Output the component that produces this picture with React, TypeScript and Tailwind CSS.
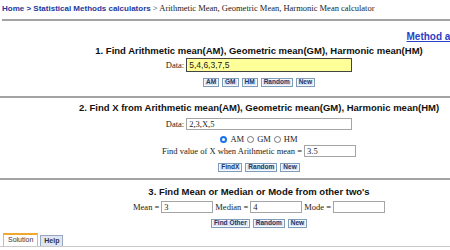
const sans = "font-['Liberation_Sans',Arial,sans-serif]";
const serif = "font-['Liberation_Serif','Times_New_Roman',serif]";

const Btn = ({ label }: { label: string }) => (
  <span
    className={`${sans} flex items-center h-[9px] px-[2px] border border-[#7f9db9] bg-[#dbe5f3] text-[6.5px] font-bold leading-none text-[#1d3466] shadow-[inset_0_0_0_1px_#f4f8fd]`}
  >
    {label}
  </span>
);

const Field = ({ value, w, yellow }: { value: string; w: string; yellow?: boolean }) => (
  <span
    className={`flex items-center ${w} h-full px-[2px] text-[8.5px] leading-none ${
      yellow
        ? `${sans} bg-[#ffff99] border border-[#444] text-[#222]`
        : `${serif} bg-white border border-[#a5a5a5] text-[#222]`
    }`}
  >
    {value}
  </span>
);

const Radio = ({ on }: { on?: boolean }) =>
  on ? (
    <span className="w-[7px] h-[7px] rounded-full bg-[#1a73e8] flex items-center justify-center">
      <span className="w-[3px] h-[3px] rounded-full bg-white" />
    </span>
  ) : (
    <span className="w-[7px] h-[7px] rounded-full border border-[#777] bg-white" />
  );

const Title = ({ text, cls }: { text: string; cls: string }) => (
  <div className={`${sans} ${cls} h-[14px] flex items-center justify-center text-[9.5px] font-bold text-[#111] whitespace-nowrap`}>
    {text}
  </div>
);

const Sep = ({ cls }: { cls: string }) => <div className={`${cls} h-[2px] bg-[#a3a3a3]`} />;

export default function App() {
  return (
    <div className="w-[450px] h-[250px] overflow-hidden bg-white">
      <div className="w-[518px]">
        <div className="h-[19px] pl-[2px] pt-[3px] text-[8px] leading-[10px] whitespace-nowrap">
          <span className={`${sans} font-bold text-[#23399c]`}>Home &gt; Statistical Methods calculators</span>
          <span className={`${serif} text-[8.5px] text-[#222]`}> &gt; Arithmetic Mean, Geometric Mean, Harmonic Mean calculator</span>
        </div>
        <Sep cls="ml-[2px]" />

        <div className="h-[21px] flex items-end justify-end pr-[7px]">
          <span className={`${sans} text-[10px] font-bold text-[#2b41c4] underline leading-[11px] whitespace-nowrap`}>
            Method and examples
          </span>
        </div>

        <Title text="1. Find Arithmetic mean(AM), Geometric mean(GM), Harmonic mean(HM)" cls="mt-[2px]" />
        <div className={`${serif} h-[14px] flex items-center justify-center gap-[2px] text-[8.5px] text-[#222]`}>
          <span>Data:</span>
          <Field value="5,4,6,3,7,5" w="w-[166px]" yellow />
        </div>
        <div className="mt-[6px] flex justify-center gap-[3px]">
          <Btn label="AM" />
          <Btn label="GM" />
          <Btn label="HM" />
          <Btn label="Random" />
          <Btn label="New" />
        </div>
        <Sep cls="mt-[9px]" />

        <Title text="2. Find X from Arithmetic mean(AM), Geometric mean(GM), Harmonic mean(HM)" cls="mt-[3px]" />
        <div className={`${serif} mt-[3px] h-[12px] flex items-center justify-center gap-[2px] text-[8.5px] text-[#222]`}>
          <span>Data:</span>
          <Field value="2,3,X,5" w="w-[166px]" />
        </div>
        <div className={`${serif} mt-[4px] h-[11px] flex items-center justify-center gap-[3px] text-[8.5px] text-[#222]`}>
          <Radio on />
          <span>AM</span>
          <Radio />
          <span>GM</span>
          <Radio />
          <span>HM</span>
        </div>
        <div className={`${serif} h-[12px] flex items-center justify-center gap-[2px] text-[8.5px] text-[#222]`}>
          <span>Find value of X when Arithmetic mean =</span>
          <Field value="3.5" w="w-[52px]" />
        </div>
        <div className="mt-[6px] flex justify-center gap-[3px]">
          <Btn label="FindX" />
          <Btn label="Random" />
          <Btn label="New" />
        </div>
        <Sep cls="mt-[6px]" />

        <Title text="3. Find Mean or Median or Mode from other two's" cls="mt-[5px]" />
        <div className={`${serif} mt-[2px] h-[12px] flex items-center justify-center gap-[2px] text-[8.5px] text-[#222]`}>
          <span>Mean =</span>
          <Field value="3" w="w-[52px]" />
          <span>Median =</span>
          <Field value="4" w="w-[52px]" />
          <span>Mode =</span>
          <Field value="" w="w-[52px]" />
        </div>
        <div className="mt-[6px] flex justify-center gap-[3px]">
          <Btn label="Find Other" />
          <Btn label="Random" />
          <Btn label="New" />
        </div>

        <div className="mt-[6px] pl-[3px] flex items-end gap-[2px] border-b border-[#c9c9c9] h-[13px]">
          <span
            className={`${sans} h-[13px] px-[4px] flex items-center border border-b-0 border-[#bcbcbc] border-t-2 border-t-[#f0a92e] bg-white text-[7px] text-[#333]`}
          >
            Solution
          </span>
          <span
            className={`${sans} h-[11px] px-[3px] flex items-center border border-b-0 border-[#9aa7c0] bg-[#dfe5f1] text-[7px] font-bold text-[#334]`}
          >
            Help
          </span>
        </div>
      </div>
    </div>
  );
}
